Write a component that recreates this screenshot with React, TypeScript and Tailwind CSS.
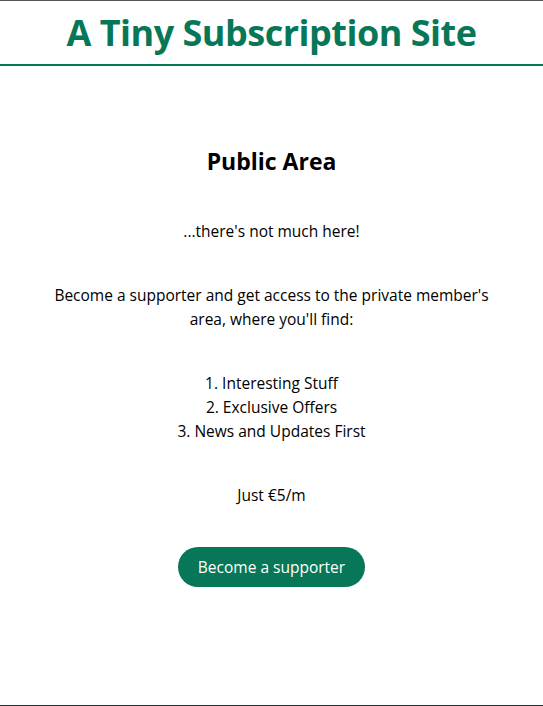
import React from 'react';

const perks = ['Interesting Stuff', 'Exclusive Offers', 'News and Updates First'];

const App = () => {
  return (
    <div className="min-h-[706px] flex flex-col bg-white border-t border-b border-t-[#555555] border-b-[#2a2f30] font-['Open_Sans',sans-serif] text-black">
      <header className="h-[65px] shrink-0 flex items-center justify-center border-b-2 border-[#077757]">
        <h1 className="text-[36px] font-bold text-[#077757] tracking-[-0.5px] leading-none">
          A Tiny Subscription Site
        </h1>
      </header>

      <main className="flex-1 flex flex-col items-center text-center text-[15.5px] leading-6 pt-[77px] px-12 gap-10">
        <h2 className="text-[23px] font-bold leading-9">Public Area</h2>
        <p>...there's not much here!</p>
        <p>
          Become a supporter and get access to the private member's
          <br />
          area, where you'll find:
        </p>
        <ol>
          {perks.map((perk, i) => (
            <li key={perk}>
              {i + 1}. {perk}
            </li>
          ))}
        </ol>
        <p>Just €5/m</p>
        <button className="h-10 px-5 rounded-full bg-[#077757] text-white text-[15.5px]">
          Become a supporter
        </button>
      </main>
    </div>
  );
};

export default App;
